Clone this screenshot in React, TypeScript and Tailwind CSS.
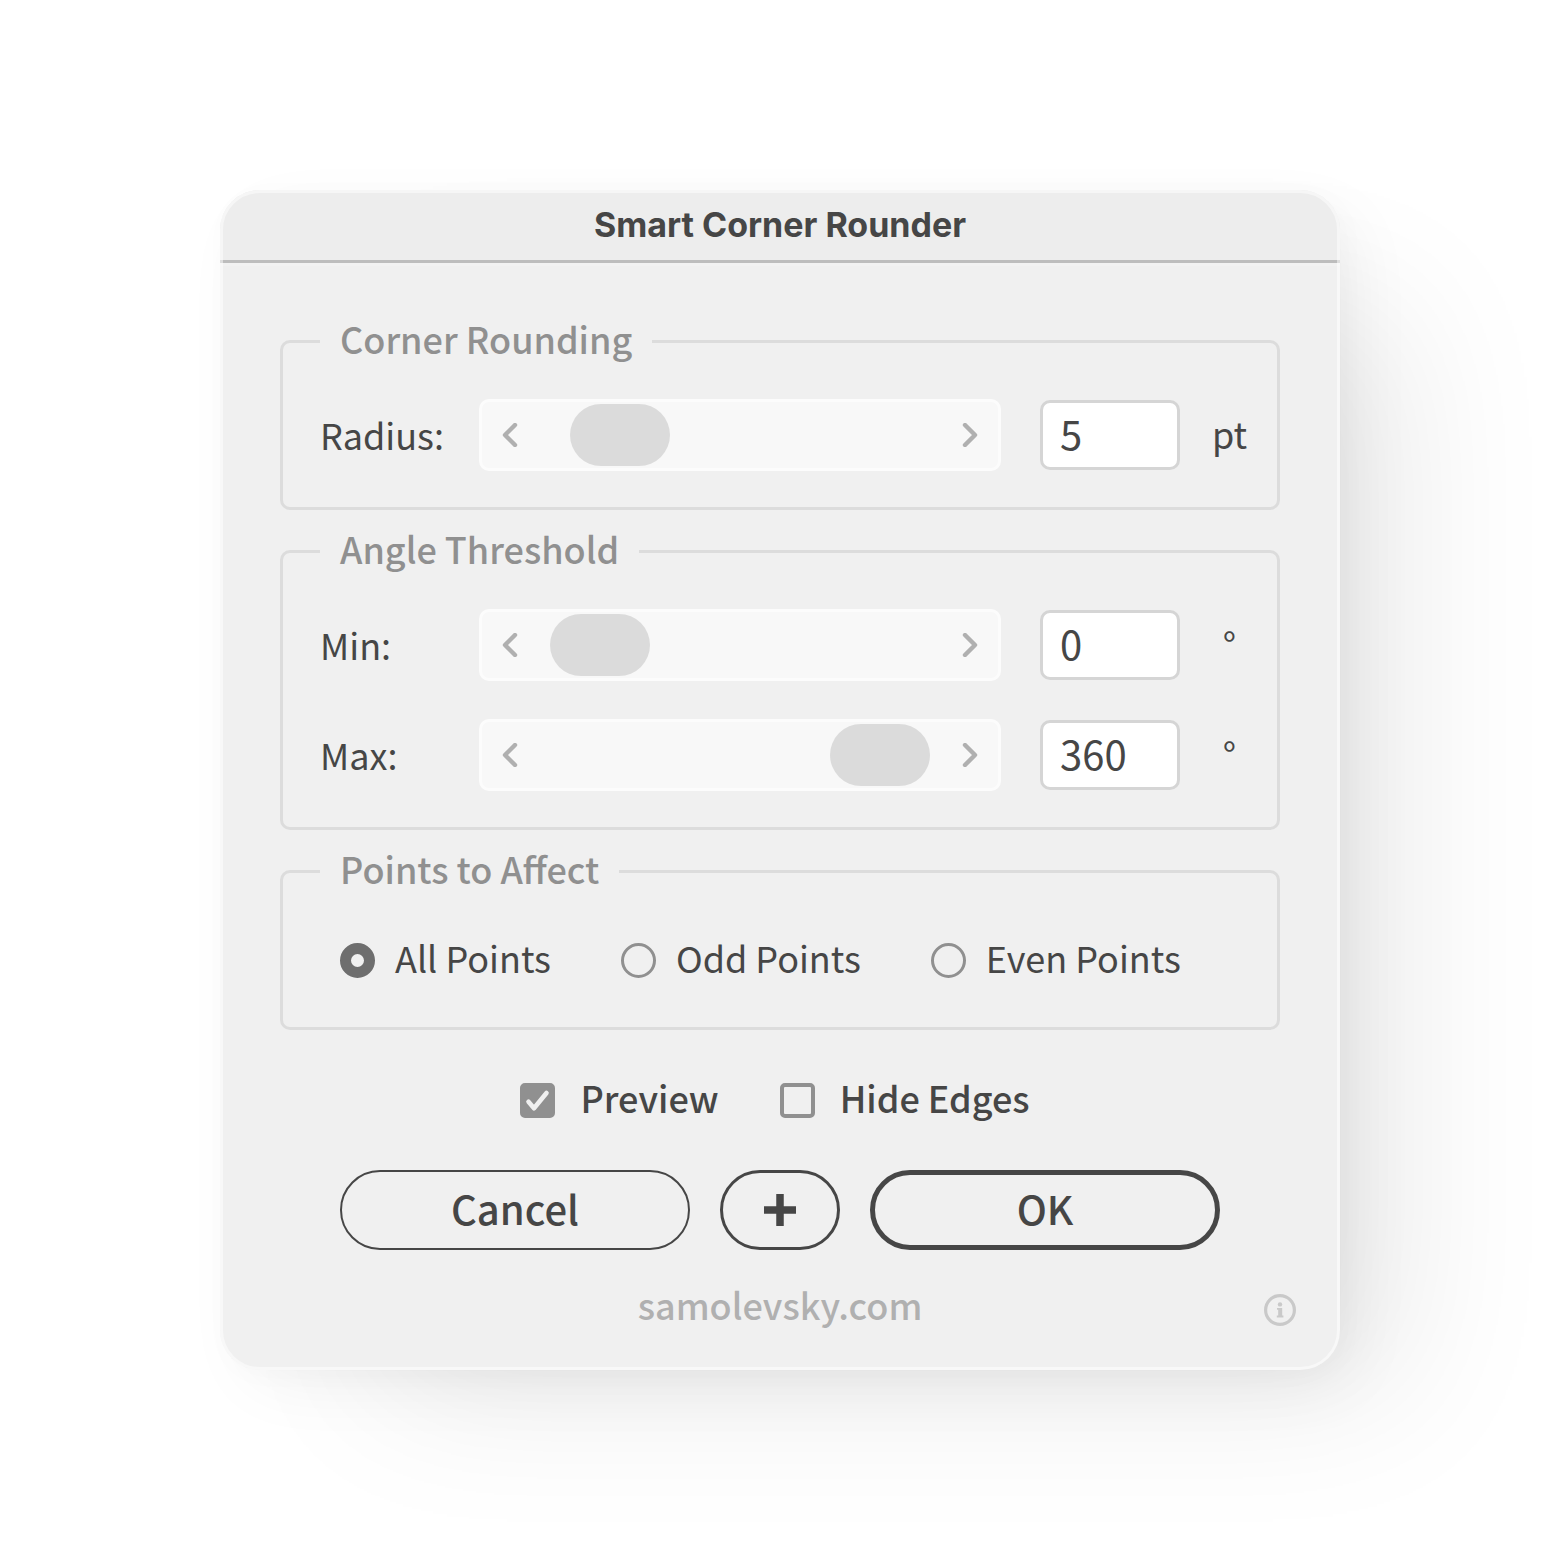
import { useState } from "react";
import type { ReactNode } from "react";

type SliderFieldProps = {
  id: string;
  label: string;
  unit: string;
  max: number;
  value: number;
  onChange: (value: number) => void;
};

const Chevron = ({ direction }: { direction: "left" | "right" }) => (
  <svg
    xmlns="http://www.w3.org/2000/svg"
    className="w-6 h-6"
    viewBox="0 0 24 24"
    fill="none"
    stroke="#b0b0b0"
    strokeWidth={4.4}
    strokeLinecap="round"
    strokeLinejoin="round"
  >
    <path d={direction === "left" ? "M17 2L7 12L17 22" : "M7 2L17 12L7 22"} />
  </svg>
);

const Group = ({ title, children }: { title: string; children: ReactNode }) => (
  <fieldset className="border-3 border-[#dcdcdc] rounded-[10px] min-w-0 pt-[38px] pb-9 pl-[37px]">
    <legend className="px-5 pb-1.5 text-4xl leading-[33px] font-medium text-[#909090]">
      {title}
    </legend>
    {children}
  </fieldset>
);

const SliderField = ({
  id,
  label,
  unit,
  max,
  value,
  onChange,
}: SliderFieldProps) => {
  const update = (next: number) => {
    if (Number.isNaN(next)) return;
    onChange(Math.min(max, Math.max(0, next)));
  };

  return (
    <div className="flex items-center">
      <label htmlFor={id} className="w-[159px] shrink-0 pb-0.5 text-4xl">
        {label}
      </label>
      <div className="flex flex-1 min-w-0 items-center h-[72px] rounded-[10px] border-3 border-[#fcfcfc] bg-[#f8f8f8]">
        <button
          type="button"
          aria-label={`Decrease ${label}`}
          onClick={() => update(value - 1)}
          className="flex w-[68px] h-full shrink-0 items-center pl-4"
        >
          <Chevron direction="left" />
        </button>
        <input
          type="range"
          aria-label={label}
          min={0}
          max={max}
          value={value}
          onChange={(e) => update(Number(e.target.value))}
          className="flex-1 min-w-0 h-[62px] appearance-none bg-transparent [&::-webkit-slider-thumb]:appearance-none [&::-webkit-slider-thumb]:w-[100px] [&::-webkit-slider-thumb]:h-[62px] [&::-webkit-slider-thumb]:rounded-full [&::-webkit-slider-thumb]:bg-[#dbdbdb]"
        />
        <button
          type="button"
          aria-label={`Increase ${label}`}
          onClick={() => update(value + 1)}
          className="flex w-[68px] h-full shrink-0 items-center justify-end pr-4"
        >
          <Chevron direction="right" />
        </button>
      </div>
      <input
        id={id}
        type="text"
        inputMode="numeric"
        value={value}
        onChange={(e) => update(Number(e.target.value))}
        className="ml-[39px] w-[140px] h-[70px] shrink-0 rounded-[10px] border-3 border-[#d5d5d5] bg-white px-[17px] pb-1 text-[40px]"
      />
      <span className="w-[97px] shrink-0 pb-1 pl-0.5 text-center text-4xl">
        {unit}
      </span>
    </div>
  );
};

const Check = ({
  label,
  checked,
  onChange,
}: {
  label: string;
  checked: boolean;
  onChange: (checked: boolean) => void;
}) => (
  <label className="flex items-center gap-[25px] text-4xl font-medium">
    <span className="grid w-[35px] h-[35px]">
      <input
        type="checkbox"
        checked={checked}
        onChange={(e) => onChange(e.target.checked)}
        className="col-start-1 row-start-1 appearance-none w-[35px] h-[35px] rounded-[5px] border-4 border-[#909090] checked:bg-[#909090]"
      />
      {checked && (
        <svg
          xmlns="http://www.w3.org/2000/svg"
          className="col-start-1 row-start-1 w-[35px] h-[35px] pointer-events-none"
          viewBox="0 0 35 35"
          fill="none"
          stroke="#f0f0f0"
          strokeWidth={4.6}
          strokeLinecap="round"
          strokeLinejoin="round"
        >
          <path d="M8.5 18.8L14 25.2L26.5 10" />
        </svg>
      )}
    </span>
    <span className="pb-1.5">{label}</span>
  </label>
);

const pointOptions = ["All Points", "Odd Points", "Even Points"];

export default function App() {
  const [radius, setRadius] = useState(5);
  const [minAngle, setMinAngle] = useState(0);
  const [maxAngle, setMaxAngle] = useState(360);
  const [points, setPoints] = useState(pointOptions[0]);
  const [preview, setPreview] = useState(true);
  const [hideEdges, setHideEdges] = useState(false);

  return (
    <main className="min-h-screen overflow-hidden bg-white px-5 py-[190px] text-[#464646] font-['Noto_Sans_CJK_SC',sans-serif]">
      <div className="relative mx-auto max-w-[1120px] rounded-[40px] bg-[#f0f0f0] shadow-[110px_70px_150px_-50px_rgba(0,0,0,0.09),20px_20px_70px_-10px_rgba(0,0,0,0.06),5px_5px_30px_rgba(0,0,0,0.02)]">
        <header className="flex h-[73px] items-center justify-center rounded-t-[40px] border-b-3 border-[#bdbdbd] bg-[#ededed] pb-0.5 shadow-[0_3px_0_#f2f2f2]">
          <h1 className="font-[Inter,sans-serif] text-[34px] font-bold">
            Smart Corner Rounder
          </h1>
        </header>

        <form
          className="px-[60px] pt-[59px]"
          onSubmit={(e) => e.preventDefault()}
        >
          <div className="flex flex-col gap-[22px]">
            <Group title="Corner Rounding">
              <SliderField
                id="radius"
                label="Radius:"
                unit="pt"
                max={70}
                value={radius}
                onChange={setRadius}
              />
            </Group>
            <Group title="Angle Threshold">
              <div className="flex flex-col gap-[38px]">
                <SliderField
                  id="min"
                  label="Min:"
                  unit="°"
                  max={360}
                  value={minAngle}
                  onChange={setMinAngle}
                />
                <SliderField
                  id="max"
                  label="Max:"
                  unit="°"
                  max={360}
                  value={maxAngle}
                  onChange={setMaxAngle}
                />
              </div>
            </Group>
            <Group title="Points to Affect">
              <div className="flex h-[62px] items-center gap-[70px] pl-5">
                {pointOptions.map((option) => (
                  <label
                    key={option}
                    className="flex items-center gap-5 text-4xl whitespace-nowrap"
                  >
                    <input
                      type="radio"
                      name="points"
                      checked={points === option}
                      onChange={() => setPoints(option)}
                      className="appearance-none w-[35px] h-[35px] rounded-full border-3 border-[#909090] checked:border-11 checked:border-[#6e6e6e]"
                    />
                    <span className="pb-1.5">{option}</span>
                  </label>
                ))}
              </div>
            </Group>
          </div>

          <div className="mt-[50px] flex h-10 items-center justify-center gap-[61px] pr-2.5">
            <Check label="Preview" checked={preview} onChange={setPreview} />
            <Check
              label="Hide Edges"
              checked={hideEdges}
              onChange={setHideEdges}
            />
          </div>

          <div className="mt-[50px] grid grid-cols-[1fr_120px_1fr] gap-[30px] px-[60px] text-[40px] font-medium">
            <button
              type="button"
              className="flex h-20 items-center justify-center rounded-full border-2 border-[#464646] pb-1"
            >
              Cancel
            </button>
            <button
              type="button"
              aria-label="Add"
              className="flex h-20 items-center justify-center rounded-full border-3 border-[#464646]"
            >
              <svg
                xmlns="http://www.w3.org/2000/svg"
                className="w-8 h-8"
                viewBox="0 0 32 32"
                stroke="currentColor"
                strokeWidth={7.5}
              >
                <path d="M16 0V32M0 16H32" />
              </svg>
            </button>
            <button
              type="submit"
              className="flex h-20 items-center justify-center rounded-full border-5 border-[#464646] pb-1"
            >
              OK
            </button>
          </div>
        </form>

        <footer className="grid h-[120px] grid-cols-[1fr_auto_1fr] items-center px-11">
          <a
            href="https://samolevsky.com"
            className="col-start-2 pb-3 text-4xl font-medium text-[#b0b0b0]"
          >
            samolevsky.com
          </a>
          <button type="button" aria-label="Info" className="justify-self-end">
            <svg
              xmlns="http://www.w3.org/2000/svg"
              className="w-8 h-8"
              viewBox="0 0 32 32"
              fill="#c9c9c9"
            >
              <circle
                cx="16"
                cy="16"
                r="14.4"
                fill="none"
                stroke="#c9c9c9"
                strokeWidth={3.2}
              />
              <circle cx="16" cy="10.4" r="2.2" />
              <path d="M13 14H18.2V21.4H19.4V23.4H12.8V21.4H14.2V15.8H13Z" />
            </svg>
          </button>
        </footer>

        {/* light rim, sits over the header divider */}
        <div className="pointer-events-none absolute inset-0 rounded-[40px] border-3 border-white/50" />
      </div>
    </main>
  );
}
